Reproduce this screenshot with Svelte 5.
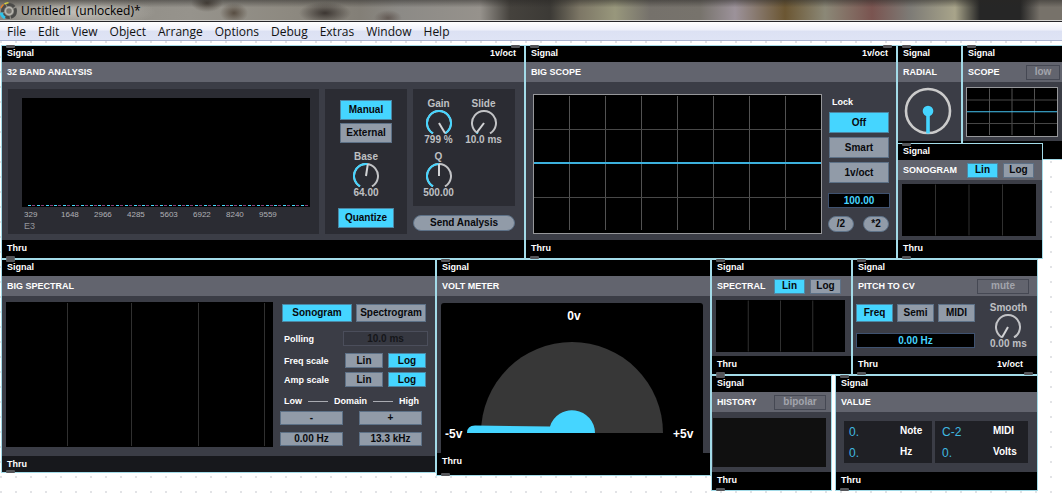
<script lang="ts">
  type Box = {
    title: string;
    x: number;
    y: number;
    w: number;
    h: number;
    foot?: number;
    pad?: number;
    inlets?: string[];
    outlets?: string[];
    dim?: boolean;
  };

  const menus = ["File", "Edit", "View", "Object", "Arrange", "Options", "Debug", "Extras", "Window", "Help"];
  const bands = [329, 1648, 2966, 4285, 5603, 6922, 8240, 9559];

  // patcher coordinates, origin at the top left of the canvas
  const boxes: Record<string, Box> = {
    bands: { title: "32 BAND ANALYSIS", x: 1, y: 4, w: 524, h: 214, inlets: ["Signal", "1v/oct"] },
    bigScope: { title: "BIG SCOPE", x: 525, y: 4, w: 372, h: 214, inlets: ["Signal", "1v/oct"] },
    radial: { title: "RADIAL", x: 897, y: 4, w: 65, h: 115, outlets: [] },
    scope: { title: "SCOPE", x: 962, y: 4, w: 106, h: 115, pad: 7, outlets: [] },
    sonogram: { title: "SONOGRAM", x: 897, y: 102, w: 146, h: 116 },
    bigSpectral: { title: "BIG SPECTRAL", x: 1, y: 218, w: 435, h: 214, foot: 16, dim: true },
    volt: { title: "VOLT METER", x: 436, y: 218, w: 275, h: 217, foot: 22 },
    spectral: { title: "SPECTRAL", x: 711, y: 218, w: 141, h: 116, pad: 10 },
    pitch: { title: "PITCH TO CV", x: 852, y: 218, w: 186, h: 116, outlets: ["Thru", "1v/oct"] },
    history: { title: "HISTORY", x: 711, y: 334, w: 121, h: 116, pad: 5 },
    value: { title: "VALUE", x: 835, y: 334, w: 203, h: 116 },
  };

  let source = $state("Manual");
  let quantize = $state(true);
  let lock = $state("Off");
  let lockFreq = $state("100.00");
  let view = $state("Sonogram");
  let freqScale = $state("Log");
  let ampScale = $state("Log");
  let sonoScale = $state("Lin");
  let specScale = $state("Lin");
  let unit = $state("Freq");
  let pitchOut = $state("0.00 Hz");

  let base = $state(64);
  let gain = $state(799);
  let slide = $state(10);
  let q = $state(500);
  let smooth = $state(0);

  // dial angle runs 300 degrees, starting at the lower left
  function point(pos: number, r = 12) {
    const a = ((-150 + pos * 300) * Math.PI) / 180;
    return `${(14 + r * Math.sin(a)).toFixed(2)} ${(13 - r * Math.cos(a)).toFixed(2)}`;
  }

  function arc(from: number, to: number) {
    return `M${point(from)} A12 12 0 ${to - from > 0.6 ? 1 : 0} 1 ${point(to)}`;
  }
</script>

{#snippet box(b: Box, tools: any, body: any)}
  <section
    class="box"
    class:dim={b.dim}
    style="left:{b.x}px;top:{b.y}px;width:{b.w}px;height:{b.h}px"
  >
    <div class="io">
      {#each b.inlets ?? ["Signal"] as name}<span>{name}</span>{/each}
    </div>
    <header style="padding-right:{b.pad ?? 8}px">
      <h2>{b.title}</h2>
      {#if tools}<div class="tools">{@render tools()}</div>{/if}
    </header>
    <div class="body">{@render body()}</div>
    <div class="io out" style="height:{b.foot ?? 18}px">
      {#each b.outlets ?? ["Thru"] as name}<span>{name}</span>{/each}
    </div>
    <i class="port"></i>
    {#if b.inlets}<i class="port right"></i>{/if}
    {#if !b.outlets || b.outlets.length}<i class="port bottom"></i>{/if}
    {#if b.outlets && b.outlets.length > 1}<i class="port bottom right"></i>{/if}
  </section>
{/snippet}

{#snippet tab(label: string, current: string, pick: (v: string) => void)}
  <button class="btn" class:on={label === current} aria-pressed={label === current} onclick={() => pick(label)}>{label}</button>
{/snippet}

{#snippet knob(label: string, value: number, max: number, text: string, set: (v: number) => void)}
  {@const pos = value / max}
  <label class="knob">
    <span>{label}</span>
    <svg viewBox="0 0 28 24" width="28" height="24" aria-hidden="true">
      <path d={arc(0, 1)} stroke="#c2c3c6" />
      {#if pos > 0}<path d={arc(0, pos)} stroke="#45d5ff" />{/if}
      <path d="M14 13 L{point(pos)}" stroke="#d2d3d5" />
    </svg>
    <span>{text}</span>
    <input type="range" min="0" {max} {value} oninput={(e) => set(+e.currentTarget.value)} />
  </label>
{/snippet}

{#snippet lines(at: number[])}
  <svg class="screen" viewBox="0 0 100 100" preserveAspectRatio="none" aria-hidden="true">
    {#each at as x}<line x1={x} x2={x} y1="1" y2="99" stroke="#303030" />{/each}
  </svg>
{/snippet}

{#snippet grid(cols: number)}
  <svg class="screen framed" viewBox="0 0 100 100" preserveAspectRatio="none" aria-hidden="true">
    {#each Array(cols - 1) as _, i}
      <line x1={((i + 1) * 100) / cols} x2={((i + 1) * 100) / cols} y1="1" y2="98" stroke="#525252" />
    {/each}
    <line x1="0" x2="100" y1="25" y2="25" stroke="#484848" />
    <line x1="0" x2="100" y1="74" y2="74" stroke="#484848" />
    <line x1="0" x2="100" y1="49.500" y2="49.500" class="trace" />
  </svg>
{/snippet}

{#snippet bandsBody()}
  <div class="bands">
    <div class="panel analyser">
      <div class="bars">
        {#each Array(32) as _}<i></i>{/each}
      </div>
      <div class="freqs">
        {#each bands as f}<span>{f}</span>{/each}
      </div>
      <span class="note">E3</span>
    </div>
    <div class="panel source">
      {@render tab("Manual", source, (v) => (source = v))}
      {@render tab("External", source, (v) => (source = v))}
      {@render knob("Base", base, 121, base.toFixed(2), (v) => (base = v))}
      <button class="btn wide" class:on={quantize} onclick={() => (quantize = !quantize)}>Quantize</button>
    </div>
    <div class="send">
      <div class="panel knobs">
        {@render knob("Gain", gain, 800, `${gain} %`, (v) => (gain = v))}
        {@render knob("Slide", slide, 400, `${slide.toFixed(1)} ms`, (v) => (slide = v))}
        {@render knob("Q", q, 1000, q.toFixed(2), (v) => (q = v))}
      </div>
      <button class="btn round">Send Analysis</button>
    </div>
  </div>
{/snippet}

{#snippet bigScopeBody()}
  <div class="big-scope">
    {@render grid(8)}
    <div class="lock">
      <h3>Lock</h3>
      {#each ["Off", "Smart", "1v/oct"] as name}
        {@render tab(name, lock, (v) => (lock = v))}
      {/each}
      <input class="num" aria-label="Lock frequency" bind:value={lockFreq} />
      <div class="pair">
        <button class="btn round">/2</button>
        <button class="btn round">*2</button>
      </div>
    </div>
  </div>
{/snippet}

{#snippet radialBody()}
  <svg class="radial" viewBox="0 0 48 48" width="48" height="48" aria-hidden="true">
    <circle cx="24" cy="24" r="22" fill="none" stroke="#cbcbcb" stroke-width="2.6" />
    <path d="M24 24V46.500" stroke="#45d5ff" stroke-width="3.600" />
    <circle cx="24" cy="24" r="5.300" fill="#45d5ff" />
  </svg>
{/snippet}

{#snippet scopeTools()}<button class="btn ghost small">low</button>{/snippet}
{#snippet scopeBody()}<div class="mini-scope">{@render grid(4)}</div>{/snippet}

{#snippet sonogramTools()}
  {@render tab("Lin", sonoScale, (v) => (sonoScale = v))}
  {@render tab("Log", sonoScale, (v) => (sonoScale = v))}
{/snippet}
{#snippet quarters()}<div class="mini">{@render lines([25, 50, 75])}</div>{/snippet}

{#snippet bigSpectralBody()}
  <div class="big-spectral">
    {@render lines([23, 47, 72, 97])}
    <div class="settings">
      <div class="views">
        {@render tab("Sonogram", view, (v) => (view = v))}
        {@render tab("Spectrogram", view, (v) => (view = v))}
      </div>
      <label class="polling">Polling <input class="num off" value="10.0 ms" disabled /></label>
      <div class="scale">
        <h3>Freq scale</h3>
        {@render tab("Lin", freqScale, (v) => (freqScale = v))}
        {@render tab("Log", freqScale, (v) => (freqScale = v))}
      </div>
      <div class="scale">
        <h3>Amp scale</h3>
        {@render tab("Lin", ampScale, (v) => (ampScale = v))}
        {@render tab("Log", ampScale, (v) => (ampScale = v))}
      </div>
      <div class="domain"><h3>Low</h3><hr /><h3>Domain</h3><hr /><h3>High</h3></div>
      <div class="range">
        <button class="btn">-</button>
        <button class="btn">+</button>
        <button class="btn">0.00 Hz</button>
        <button class="btn">13.3 kHz</button>
      </div>
    </div>
  </div>
{/snippet}

{#snippet voltBody()}
  <svg class="volt" viewBox="0 0 262 150" role="img" aria-label="Volt meter">
    <path d="M40 130A91 91 0 0 1 222 130Z" fill="#373737" />
    <path d="M26 130Q26 122.500 34 122.500L109 123.500A23 23 0 0 1 154 130Z" fill="#45d5ff" />
    <text x="133" y="17" text-anchor="middle">0v</text>
    <text x="4" y="135">-5v</text>
    <text x="232" y="135">+5v</text>
  </svg>
{/snippet}

{#snippet spectralTools()}
  {@render tab("Lin", specScale, (v) => (specScale = v))}
  {@render tab("Log", specScale, (v) => (specScale = v))}
{/snippet}

{#snippet pitchTools()}<button class="btn ghost">mute</button>{/snippet}
{#snippet pitchBody()}
  <div class="pitch">
    <div class="units">
      {#each ["Freq", "Semi", "MIDI"] as name}
        {@render tab(name, unit, (v) => (unit = v))}
      {/each}
      <input class="num" aria-label="Pitch" bind:value={pitchOut} />
    </div>
    {@render knob("Smooth", smooth, 1000, `${smooth.toFixed(2)} ms`, (v) => (smooth = v))}
  </div>
{/snippet}

{#snippet historyTools()}<button class="btn ghost">bipolar</button>{/snippet}
{#snippet historyBody()}<div class="history"></div>{/snippet}

{#snippet valueBody()}
  <div class="values">
    <dl><dd>0.</dd><dt>Note</dt><dd>0.</dd><dt>Hz</dt></dl>
    <dl><dd>C-2</dd><dt>MIDI</dt><dd>0.</dd><dt>Volts</dt></dl>
  </div>
{/snippet}

<div class="window">
  <div class="titlebar">
    <svg viewBox="0 0 18 18" width="18" height="18" aria-hidden="true">
      <circle cx="9" cy="9" r="6.500" fill="#8d8b85" stroke="#4b4b49" stroke-width="3" stroke-dasharray="8 1.200" />
      <circle cx="9" cy="9" r="3.500" fill="#77756f" stroke="#b9b7b0" stroke-width="1.500" />
      <path d="M1 6A8.500 8.500 0 0 1 3.500 2.500" stroke="#e8802c" stroke-width="1.500" fill="none" />
      <path d="M4.500 2A8.500 8.500 0 0 1 8.500 .8" stroke="#d9d23c" stroke-width="1.500" fill="none" />
      <path d="M1 10.500A8 8 0 0 0 5 16" stroke="#2fc3ea" stroke-width="3" fill="none" />
    </svg>
    <h1>Untitled1 (unlocked)*</h1>
  </div>

  <nav class="menubar">
    {#each menus as name}<button>{name}</button>{/each}
  </nav>

  <main class="patcher">
    {@render box(boxes.bands, null, bandsBody)}
    {@render box(boxes.bigScope, null, bigScopeBody)}
    {@render box(boxes.radial, null, radialBody)}
    {@render box(boxes.scope, scopeTools, scopeBody)}
    {@render box(boxes.sonogram, sonogramTools, quarters)}
    {@render box(boxes.bigSpectral, null, bigSpectralBody)}
    {@render box(boxes.volt, null, voltBody)}
    {@render box(boxes.spectral, spectralTools, quarters)}
    {@render box(boxes.pitch, pitchTools, pitchBody)}
    {@render box(boxes.history, historyTools, historyBody)}
    {@render box(boxes.value, null, valueBody)}
  </main>
</div>

<style>
  :global(body) { margin: 0; background: #fff; }
  * { box-sizing: border-box; }
  h1, h2, h3, dl, dd, dt, hr { margin: 0; padding: 0; }
  svg { display: block; }
  line { vector-effect: non-scaling-stroke; stroke-width: 1; shape-rendering: crispEdges; }

  .window { display: flex; flex-direction: column; min-height: 100vh; font-family: "Liberation Sans", Arial, sans-serif; }

  .titlebar {
    display: flex; align-items: center; gap: 3px; height: 22px; border-bottom: 1px solid #26262a;
    box-shadow: inset 0 -1px #d6d5d2;
    background:
      linear-gradient(rgba(40,38,36,.5), rgba(40,38,36,0) 35%),
      radial-gradient(ellipse 80px 16px at 76px 12px, rgba(226,224,218,.6), transparent),
      radial-gradient(ellipse 16px 9px at 207px 3px, rgba(62,54,46,.85), transparent),
      radial-gradient(ellipse 14px 10px at 234px 13px, rgba(78,66,54,.85), transparent),
      radial-gradient(ellipse 26px 11px at 325px 13px, rgba(56,50,46,.95), transparent),
      radial-gradient(ellipse 14px 8px at 388px 18px, rgba(84,72,66,.7), transparent),
      linear-gradient(90deg, #8b8881 0, #96938c 190px, #8d8980 290px, #837f77 360px, #8c8a86 400px, #96928c 480px, #45423d 510px, #3c3a36 550px, #7d7766 580px, #98977c 615px, #75716b 650px, #77736c 700px, #9c929a 735px, #6b5632 785px, #8b8877 825px, #7a5450 872px, #7d7b76 910px, #a8a48a 955px, #262626 980px, #262626 1020px, #77726a 1040px, #77726a 100%);
  }
  h1 { font: 12px/20px "Open Sans", "Segoe UI", sans-serif; color: #000; }

  .menubar { display: flex; gap: 12px; height: 19px; padding: 0 7px; border-bottom: 1px solid #aab4d0; background: linear-gradient(#fff, #eef0fa 45%, #dce1f3 50%, #dfe4f5); }
  .menubar button { border: 0; padding: 0; background: none; color: #111; font: 12px/20px "Open Sans", "Segoe UI", sans-serif; }

  .patcher { position: relative; flex: 1; overflow: hidden; background: #fff radial-gradient(circle at 1px 1px, #e2e3e6 1px, transparent 1px) 0 0 / 15px 15px; }

  .box { position: absolute; display: flex; flex-direction: column; border: 1px solid #a3dbe8; background: #000; color: #fff; font-size: 9px; font-weight: 700; }
  .io { display: flex; flex: none; justify-content: space-between; height: 16px; padding: 0 8px 0 5px; line-height: 15px; }
  .io.out { padding-right: 14px; line-height: 16px; }
  .dim .out { background: #17181c; }
  header { display: flex; flex: none; align-items: center; height: 20px; padding-left: 5px; background: #62646e; }
  h2, h3 { font-size: 9px; line-height: 12px; font-weight: 700; }
  .tools { display: flex; gap: 5px; margin-left: auto; }
  .tools .btn { width: 31px; height: 15px; }
  .body { flex: 1; min-height: 0; background: #3b3d46; }

  .port { position: absolute; left: 4px; top: -1px; width: 9px; height: 3px; border-radius: 1px; background: #55565a; }
  .port.right { left: auto; right: 4px; }
  .port.bottom { top: auto; bottom: -1px; }

  .btn { border: 1px solid #5d7187; padding: 0; background: #919ba8; color: #08090c; font: 700 10px/12px "Liberation Sans", Arial, sans-serif; }
  .btn.on { border-color: #4c87a4; background: #45d5ff; }
  .btn.round { border-radius: 8px; height: 16px; }
  .tools .btn.ghost { width: 52px; border-color: #454853; background: transparent; color: #a2a4ac; }
  .tools .btn.small { width: 34px; }
  .num { min-width: 0; height: 15px; border: 1px solid #3f5270; padding: 0; background: #000; color: #45d5ff; font: 700 10px/12px "Liberation Sans", Arial, sans-serif; text-align: center; }
  .num.off { background: #363841; border-color: #4b4e5b; color: #15161a; }

  .knob { position: relative; display: flex; flex-direction: column; align-items: center; color: #bfc0c3; font-size: 10px; line-height: 12px; }
  .knob span { white-space: nowrap; }
  .knob path { fill: none; stroke-width: 2; }
  .knob input { position: absolute; inset: 12px 0; width: 100%; height: 24px; margin: 0; opacity: 0; }

  .screen { background: #000; }
  .framed { border: 1px solid #96979a; }
  .trace { stroke: #45c4f2; }

  .bands { display: flex; gap: 6px; height: 100%; padding: 7px 9px 6px 6px; }
  .panel { background: #2b2c33; }
  .analyser { flex: 1; padding: 9px 9px 0 14px; }
  .bars { display: flex; justify-content: space-between; align-items: flex-end; height: 109px; padding: 0 6px 1px 6px; background: #000; }
  .bars i { width: 3px; height: 1px; background: #45dcff; box-shadow: 4px 0 #8a3f78; }
  .freqs { display: flex; padding: 2px 0 0 2px; color: #b0b1b5; font-size: 8px; line-height: 11px; font-weight: 400; }
  .freqs span { width: 33px; }
  .freqs span:first-child { width: 37px; }
  .note { padding-left: 2px; color: #93949a; line-height: 12px; font-weight: 400; }
  .source { display: flex; flex-direction: column; align-items: center; width: 82px; padding-top: 11px; }
  .source .btn { width: 52px; height: 20px; margin-bottom: 3px; }
  .source .knob { margin: 5px 0 9px; }
  .source .wide { width: 56px; }
  .send { display: flex; flex-direction: column; gap: 9px; width: 102px; }
  .knobs { display: grid; grid-template-columns: 45px 45px; align-content: start; row-gap: 5px; height: 117px; padding: 9px 0 0 3px; }

  .big-scope { display: flex; gap: 6px; height: 100%; padding: 12px 6px 6px 7px; }
  .big-scope .screen { flex: 1; min-width: 0; height: 140px; }
  .big-scope .trace { stroke: #3cb0dc; stroke-width: 2; }
  .lock { display: flex; flex-direction: column; width: 62px; }
  .lock h3 { padding: 2px 0 4px 4px; }
  .lock > .btn { height: 21px; margin: 0 1px 4px 1px; }
  .lock .num { margin-top: 6px; }
  .pair { display: flex; justify-content: space-between; margin-top: 8px; padding-right: 1px; }
  .pair .btn { width: 26px; }

  .radial { margin: 5px 6px; }
  .mini-scope { padding: 5px 3px; }
  .mini-scope .screen { width: 92px; height: 50px; }
  .mini { padding: 4px 6px 4px 4px; }
  .mini .screen { width: 100%; height: 52px; }

  .big-spectral { display: flex; gap: 7px; height: 100%; padding: 6px 7px 6px 4px; }
  .big-spectral > .screen { flex: 1; min-width: 0; height: 145px; }
  .settings { display: flex; flex-direction: column; width: 148px; padding-top: 2px; }
  .views { display: flex; gap: 4px; padding: 0 2px 9px; }
  .views .btn { flex: 1; height: 18px; }
  .polling { display: flex; justify-content: space-between; align-items: center; padding: 0 0 7px 4px; line-height: 12px; }
  .polling .num { width: 85px; }
  .scale { display: flex; align-items: center; gap: 5px; padding: 0 2px 4px 4px; }
  .scale h3 { flex: 1; }
  .scale .btn { width: 38px; height: 15px; }
  .domain { display: flex; align-items: center; justify-content: space-between; padding: 4px 9px 4px 4px; }
  .domain hr { width: 20px; height: 1px; border: 0; background: #a9abb2; }
  .range { display: grid; grid-template-columns: 63px 63px; gap: 7px 16px; }
  .range .btn { height: 14px; }

  .volt { margin: 7px 7px 0 4px; border-radius: 3px 3px 0 0; background: #000; }
  .volt text { fill: #fff; font-size: 12px; font-weight: 700; }

  .pitch { display: flex; justify-content: space-between; padding: 6px 10px 0 2px; }
  .units { display: grid; grid-template-columns: repeat(3, 37px); gap: 11px 4px; align-content: start; width: 121px; padding: 2px 1px 0; }
  .units .btn { height: 18px; }
  .units .num { grid-column: 1 / -1; }
  .history { height: 49px; margin: 6px 5px 0 1px; background: #101010; }

  .values { display: grid; grid-template-columns: 88fr 93fr; gap: 3px; padding: 9px 9px 0 8px; }
  dl { display: grid; grid-template-columns: 51px 1fr; align-content: space-around; height: 42px; padding-left: 5px; background: #1f2025; }
  dl:last-child { padding-left: 7px; }
  dt { font-size: 10px; line-height: 17px; }
  dd { color: #3fb9e0; font-size: 12px; line-height: 20px; font-weight: 400; }
</style>
